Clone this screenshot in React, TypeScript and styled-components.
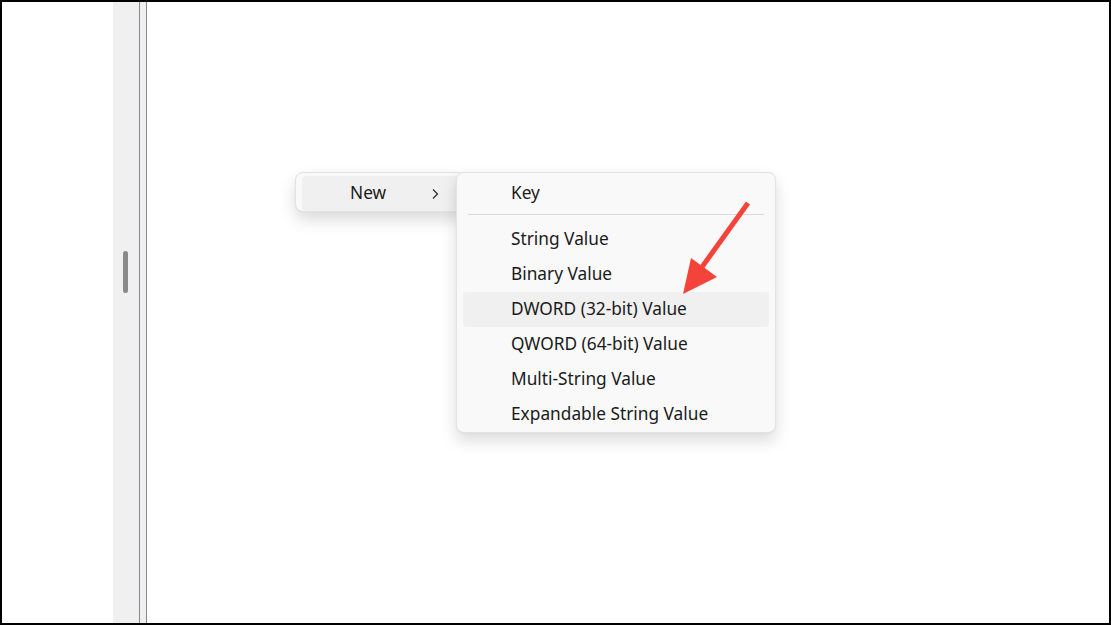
import React from "react";
import styled, { createGlobalStyle } from "styled-components";

const Global = createGlobalStyle`
  html, body { margin: 0; padding: 0; background: #fff; }
  * { box-sizing: border-box; }
`;

const Frame = styled.div`
  position: relative;
  width: 1111px;
  height: 625px;
  border: 2px solid #000;
  display: flex;
  overflow: hidden;
  font-family: "Noto Sans", "Open Sans", sans-serif;
`;

const TreePane = styled.div`
  width: 111px;
  background: #fff;
`;

const ScrollStrip = styled.div`
  width: 26px;
  background: #f0f0f0;
  display: flex;
  justify-content: center;
  padding-top: 249px;
`;

const Thumb = styled.div`
  width: 5px;
  height: 42px;
  border-radius: 3px;
  background: #8a8a8a;
  margin-left: -1px;
`;

const Splitter = styled.div`
  width: 8px;
  background: #f0f0f0;
  border-left: 1px solid #868a8e;
  border-right: 1px solid #868a8e;
`;

const ValuePane = styled.div`
  flex: 1;
  background: #fff;
`;

const Menu = styled.div<{ $left: number; $top: number; $width: number; $padTop: number }>`
  position: absolute;
  left: ${(p) => p.$left}px;
  top: ${(p) => p.$top}px;
  width: ${(p) => p.$width}px;
  background: #f9f9f9;
  border: 1px solid #e3e3e3;
  border-radius: 8px;
  box-shadow: 0 8px 16px rgba(0, 0, 0, 0.14), 0 0 2px rgba(0, 0, 0, 0.06);
  padding: ${(p) => p.$padTop}px 6px 0;
  display: flex;
  flex-direction: column;
`;

const Item = styled.div<{ $active?: boolean }>`
  height: 35px;
  display: flex;
  align-items: center;
  padding-left: 48px;
  padding-right: 18px;
  padding-bottom: 2px;
  border-radius: 4px;
  background: ${(p) => (p.$active ? "#f0f0f0" : "transparent")};
  color: #1b1b1b;
  font-size: 17.3px;
  white-space: nowrap;
`;

const Label = styled.span`
  flex: 1;
`;

const Chevron = styled.svg`
  width: 10px;
  height: 12px;
  margin-top: 2px;
`;

const Separator = styled.div`
  height: 1px;
  background: #d9d9d9;
  margin: 3px 5px 7px;
`;

const Arrow = styled.svg`
  position: absolute;
  left: 0;
  top: 0;
  pointer-events: none;
`;

export default function App() {
  const values = [
    "String Value",
    "Binary Value",
    "DWORD (32-bit) Value",
    "QWORD (64-bit) Value",
    "Multi-String Value",
    "Expandable String Value",
  ];
  return (
    <>
      <Global />
      <Frame>
        <TreePane />
        <ScrollStrip>
          <Thumb />
        </ScrollStrip>
        <Splitter />
        <ValuePane />
        <Menu $left={293} $top={170} $width={170} $padTop={3}>
          <Item $active>
            <Label>New</Label>
            <Chevron viewBox="0 0 10 12">
              <path d="M3 1.5 L7.5 6 L3 10.5" fill="none" stroke="#2a2a2a" strokeWidth="1.2" />
            </Chevron>
          </Item>
        </Menu>
        <Menu $left={454} $top={170} $width={320} $padTop={3}>
          <Item>Key</Item>
          <Separator />
          {values.map((v) => (
            <Item key={v} $active={v.startsWith("DWORD")}>
              {v}
            </Item>
          ))}
        </Menu>
        <Arrow width="1111" height="625" viewBox="0 0 1111 625">
          <line x1="746" y1="201" x2="700" y2="265" stroke="#f4433a" strokeWidth="5" />
          <polygon points="681,292 689,256 715,275" fill="#f4433a" />
        </Arrow>
      </Frame>
    </>
  );
}
